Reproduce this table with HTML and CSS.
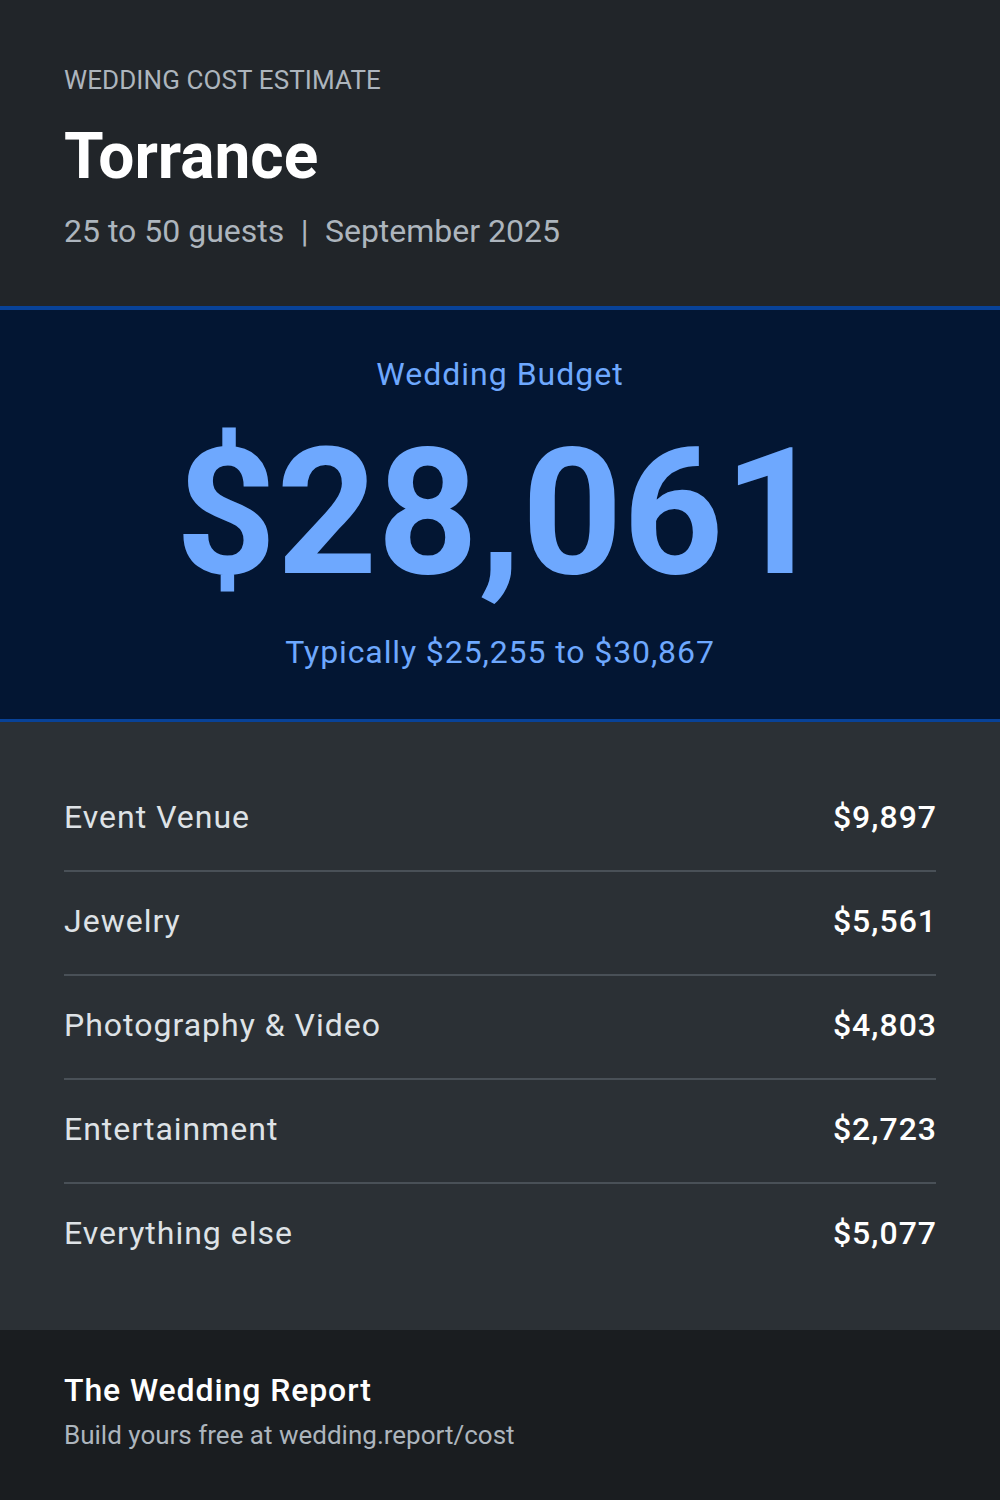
FILE: index.html
```html
<!DOCTYPE html>
<html lang="en">
<head>
<meta charset="utf-8">
<title>Wedding Cost Estimate - Torrance</title>
<link rel="stylesheet" href="styles.css">
</head>
<body>
<div class="card">
  <header class="head">
    <div class="eyebrow">WEDDING COST ESTIMATE</div>
    <h1 class="city">Torrance</h1>
    <div class="meta">25 to 50 guests <span class="sep">|</span> September 2025</div>
  </header>
  <section class="budget">
    <div class="budget-label">Wedding Budget</div>
    <div class="budget-total">$28,061</div>
    <div class="budget-range">Typically $25,255 to $30,867</div>
  </section>
  <section class="items">
    <div class="row"><span class="name">Event Venue</span><span class="amt">$9,897</span></div>
    <div class="row"><span class="name">Jewelry</span><span class="amt">$5,561</span></div>
    <div class="row"><span class="name">Photography &amp; Video</span><span class="amt">$4,803</span></div>
    <div class="row"><span class="name">Entertainment</span><span class="amt">$2,723</span></div>
    <div class="row"><span class="name">Everything else</span><span class="amt">$5,077</span></div>
  </section>
  <footer class="foot">
    <div class="brand">The Wedding Report</div>
    <div class="cta">Build yours free at wedding.report/cost</div>
  </footer>
</div>
</body>
</html>
```
FILE: styles.css
```css
* { box-sizing: border-box; }
html, body { margin: 0; padding: 0; background: #212529; }
body { font-family: Roboto, "Noto Sans", "Liberation Sans", sans-serif; }
.card { width: 1000px; height: 1500px; display: flex; flex-direction: column; }

.head {
  background: #212529;
  padding: 62px 64px 0;
  height: 310px;
  flex: none;
  border-bottom: 4px solid #084298;
}
.eyebrow { color: #adb5bd; font-size: 26px; line-height: 36px; letter-spacing: 0.1px; }
.city { margin: 21px 0 0; color: #fff; font-size: 64px; font-weight: 700; line-height: 76px; }
.meta { margin-top: 16px; color: #adb5bd; font-size: 32px; line-height: 40px; }
.sep { margin: 0 8.5px; }

.budget {
  background: #031633;
  height: 412px;
  flex: none;
  border-bottom: 3px solid #084298;
  display: flex; flex-direction: column; align-items: center;
  padding-top: 44px;
  color: #6ea8fe;
}
.budget-label { font-size: 32px; line-height: 40px; letter-spacing: 1px; }
.budget-total { font-size: 176px; font-weight: 700; line-height: 200px; margin-top: 19px; }
.budget-range { font-size: 32px; line-height: 40px; margin-top: 19px; letter-spacing: 0.9px; }

.items {
  background: #2b3035;
  flex: 1;
  padding: 46px 64px 0;
}
.row {
  display: flex; justify-content: space-between; align-items: center;
  padding: 30px 0 34px;
  line-height: 38px;
  border-bottom: 2px solid #495057;
}
.row:last-child { border-bottom: none; }
.name { color: #dee2e6; font-size: 32px; letter-spacing: 1px; }
.amt { color: #fff; font-size: 32px; font-weight: 500; letter-spacing: 1px; margin-right: -1px; }

.foot {
  background: #1a1d20;
  height: 170px;
  flex: none;
  padding: 40px 64px 0;
}
.brand { color: #fff; font-size: 32px; font-weight: 500; line-height: 40px; letter-spacing: 0.9px; }
.cta { color: #adb5bd; font-size: 26px; line-height: 34px; margin-top: 8px; }
```
